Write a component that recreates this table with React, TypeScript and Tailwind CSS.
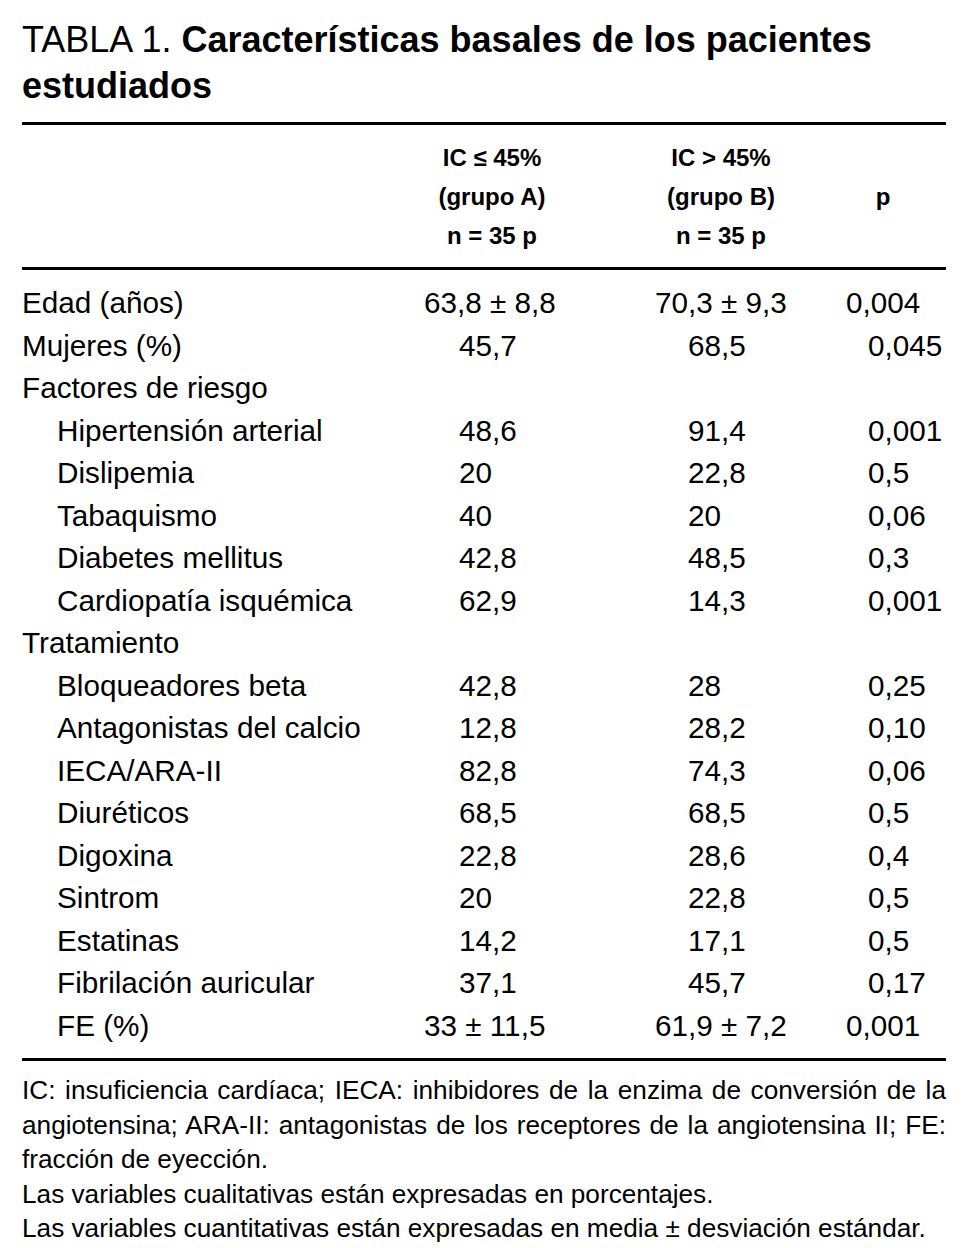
import React from 'react';

type Row = {
  label: string;
  a?: string;
  b?: string;
  p?: string;
  indent?: boolean;
  pm?: boolean; // rows with "±" sit further left
};

const rows: Row[] = [
  { label: 'Edad (años)', a: '63,8 ± 8,8', b: '70,3 ± 9,3', p: '0,004', pm: true },
  { label: 'Mujeres (%)', a: '45,7', b: '68,5', p: '0,045' },
  { label: 'Factores de riesgo' },
  { label: 'Hipertensión arterial', a: '48,6', b: '91,4', p: '0,001', indent: true },
  { label: 'Dislipemia', a: '20', b: '22,8', p: '0,5', indent: true },
  { label: 'Tabaquismo', a: '40', b: '20', p: '0,06', indent: true },
  { label: 'Diabetes mellitus', a: '42,8', b: '48,5', p: '0,3', indent: true },
  { label: 'Cardiopatía isquémica', a: '62,9', b: '14,3', p: '0,001', indent: true },
  { label: 'Tratamiento' },
  { label: 'Bloqueadores beta', a: '42,8', b: '28', p: '0,25', indent: true },
  { label: 'Antagonistas del calcio', a: '12,8', b: '28,2', p: '0,10', indent: true },
  { label: 'IECA/ARA-II', a: '82,8', b: '74,3', p: '0,06', indent: true },
  { label: 'Diuréticos', a: '68,5', b: '68,5', p: '0,5', indent: true },
  { label: 'Digoxina', a: '22,8', b: '28,6', p: '0,4', indent: true },
  { label: 'Sintrom', a: '20', b: '22,8', p: '0,5', indent: true },
  { label: 'Estatinas', a: '14,2', b: '17,1', p: '0,5', indent: true },
  { label: 'Fibrilación auricular', a: '37,1', b: '45,7', p: '0,17', indent: true },
  { label: 'FE (%)', a: '33 ± 11,5', b: '61,9 ± 7,2', p: '0,001', indent: true, pm: true },
];

function DataRow({ row }: { row: Row }) {
  return (
    <div className="grid grid-cols-[402px_231px_191px_1fr] h-[42.5px] items-center leading-none whitespace-nowrap">
      <div className={row.indent ? 'pl-[35px]' : ''}>{row.label}</div>
      <div className={row.pm ? '' : 'pl-[35px]'}>{row.a}</div>
      <div className={row.pm ? '' : 'pl-[33px]'}>{row.b}</div>
      <div className={row.pm ? '' : 'pl-[22px]'}>{row.p}</div>
    </div>
  );
}

export default function App() {
  return (
    <div className="min-h-screen w-[968px] bg-white text-black font-['Liberation_Sans',Arial,sans-serif]">
      <div className="px-[22px] pt-[17px]">
        {/* Title */}
        <h1 className="text-[36px] leading-[46px] font-normal">
          <span>TABLA 1. </span>
          <span className="font-bold">Características basales de los pacientes estudiados</span>
        </h1>

        {/* Table */}
        <div className="mt-[13px] border-t-[3px] border-black">
          <div className="flex items-center pt-[13px] pb-[12px] text-[24px] leading-[39px] font-bold">
            <div className="w-[400px]" />
            <div className="w-[140px] text-center">
              <div>IC ≤ 45%</div>
              <div>(grupo A)</div>
              <div>n = 35 p</div>
            </div>
            <div className="w-[89px]" />
            <div className="w-[140px] text-center">
              <div>IC &gt; 45%</div>
              <div>(grupo B)</div>
              <div>n = 35 p</div>
            </div>
            <div className="w-[52px]" />
            <div className="w-[80px] text-center">p</div>
          </div>

          <div className="border-t-[3px] border-black pt-[12px] pb-[11px] text-[29.7px]">
            {rows.map((row) => (
              <DataRow key={row.label} row={row} />
            ))}
          </div>
        </div>

        {/* Footnotes */}
        <div className="border-t-[3px] border-black pt-[12px] text-[26.2px] leading-[34.5px]">
          <p className="text-justify">
            IC: insuficiencia cardíaca; IECA: inhibidores de la enzima de conversión de la angiotensina; ARA-II:
            antagonistas de los receptores de la angiotensina II; FE: fracción de eyección.
          </p>
          <p>Las variables cualitativas están expresadas en porcentajes.</p>
          <p>Las variables cuantitativas están expresadas en media ± desviación estándar.</p>
        </div>
      </div>
    </div>
  );
}
